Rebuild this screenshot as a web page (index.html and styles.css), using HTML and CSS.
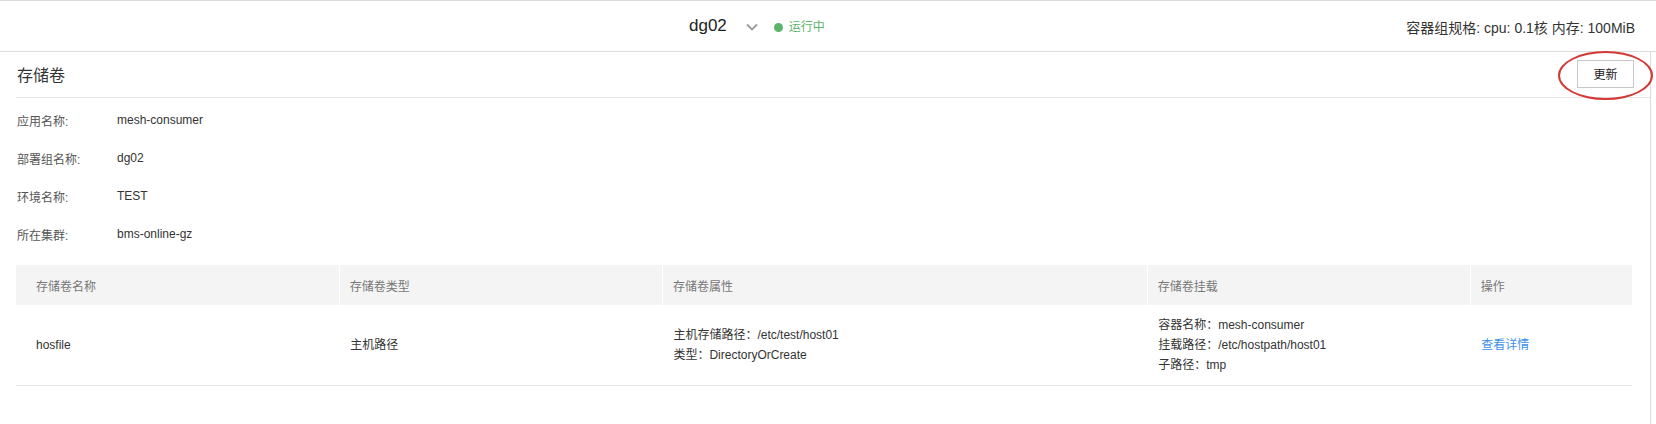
FILE: index.html
```html
<!DOCTYPE html>
<html lang="zh-CN">
<head>
<meta charset="utf-8">
<title>存储卷</title>
<link rel="stylesheet" href="styles.css">
</head>
<body>
<header class="topbar">
  <div class="instance">
    <span class="instance-name">dg02</span>
    <svg class="chevron" width="12" height="8" viewBox="0 0 12 8"><polyline points="1,1.5 6,6.5 11,1.5" fill="none" stroke="#9a9a9a" stroke-width="1.8"/></svg>
    <span class="status-dot"></span>
    <span class="status-text">运行中</span>
  </div>
  <div class="spec">容器组规格: cpu: 0.1核 内存: 100MiB</div>
</header>
<main class="panel">
  <div class="titlebar">
    <h2 class="title">存储卷</h2>
    <div class="btn-wrap">
      <button class="btn">更新</button>
      <span class="mark"></span>
    </div>
  </div>
  <dl class="info">
    <div class="info-row"><dt>应用名称:</dt><dd>mesh-consumer</dd></div>
    <div class="info-row"><dt>部署组名称:</dt><dd>dg02</dd></div>
    <div class="info-row"><dt>环境名称:</dt><dd>TEST</dd></div>
    <div class="info-row"><dt>所在集群:</dt><dd>bms-online-gz</dd></div>
  </dl>
  <table class="vol-table">
    <colgroup>
      <col class="c20"><col class="c20"><col class="c30"><col class="c20"><col class="c10">
    </colgroup>
    <thead>
      <tr><th>存储卷名称</th><th>存储卷类型</th><th>存储卷属性</th><th>存储卷挂载</th><th>操作</th></tr>
    </thead>
    <tbody>
      <tr>
        <td>hosfile</td>
        <td>主机路径</td>
        <td><div>主机存储路径：/etc/test/host01</div><div>类型：DirectoryOrCreate</div></td>
        <td><div>容器名称：mesh-consumer</div><div>挂载路径：/etc/hostpath/host01</div><div>子路径：tmp</div></td>
        <td><a class="link" href="#">查看详情</a></td>
      </tr>
    </tbody>
  </table>
</main>
</body>
</html>
```

FILE: styles.css
```css
* { box-sizing: border-box; }
html, body { margin: 0; padding: 0; background: #fff; }
body {
  font-family: "Liberation Sans", "Noto Sans CJK SC", sans-serif;
  color: #333;
  font-size: 12px;
  width: 1656px;
  height: 424px;
  overflow: hidden;
}

.topbar {
  height: 52px;
  border-top: 1px solid #dcdcdc;
  border-bottom: 1px solid #dcdcdc;
  display: flex;
  align-items: center;
  padding-left: 689px;
  padding-right: 21px;
}
.instance { display: flex; align-items: center; }
.instance-name { font-size: 17px; color: #222; line-height: 20px; }
.chevron { margin-left: 19px; margin-top: 2px; }
.status-dot {
  width: 9px; height: 9px; border-radius: 50%;
  background: #5cb56b;
  margin-left: 16px; margin-top: 2px;
}
.status-text { color: #5cb56b; font-size: 12px; margin-left: 6px; margin-top: 2px; line-height: 16px; }
.spec { margin-left: auto; font-size: 14px; color: #333; margin-top: 1px; }

.panel {
  width: 1651px;
  height: 372px;
  border-right: 1px solid #dcdcdc;
  padding-left: 16px;
}
.titlebar {
  height: 46px;
  border-bottom: 1px solid #e6e6e6;
  display: flex;
  align-items: center;
  justify-content: space-between;
  padding-right: 16px;
}
.title { margin: 0; font-size: 16px; font-weight: normal; color: #333; line-height: 20px; padding-left: 1px; margin-top: 2px; }
.btn-wrap { position: relative; display: flex; margin-top: -2px; }
.btn {
  width: 57px; height: 28px;
  border: 1px solid #c8c8c8;
  background: #fff;
  font-family: inherit;
  font-size: 12px;
  color: #222;
  padding: 0;
}
.mark {
  position: absolute;
  left: -19px; top: -9px;
  width: 95px; height: 49px;
  border: 2px solid #d33a36;
  border-radius: 50%;
  pointer-events: none;
}

.info { margin: 3px 0 0; padding: 0; }
.info-row { display: flex; height: 38px; align-items: center; }
.info-row dt { width: 100px; color: #555; padding-left: 1px; }
.info-row dd { margin: 0; color: #333; padding-left: 1px; }

.vol-table {
  margin-top: 12px;
  width: 1616px;
  border-collapse: collapse;
  table-layout: fixed;
}
.c20 { width: 20%; }
.c30 { width: 30%; }
.c10 { width: 10%; }
.vol-table th {
  height: 40px;
  background: #f4f4f4;
  color: #777;
  font-weight: normal;
  text-align: left;
  padding: 0 10px;
  border-left: 1px solid #fff;
}
.vol-table th:first-child, .vol-table td:first-child { padding-left: 20px; border-left: none; }
.vol-table td {
  height: 80px;
  padding: 0 10px 0 11px;
  border-bottom: 1px solid #e8e8e8;
  line-height: 20px;
  color: #333;
  vertical-align: middle;
}
.link { color: #3d8fe8; text-decoration: none; }
```
